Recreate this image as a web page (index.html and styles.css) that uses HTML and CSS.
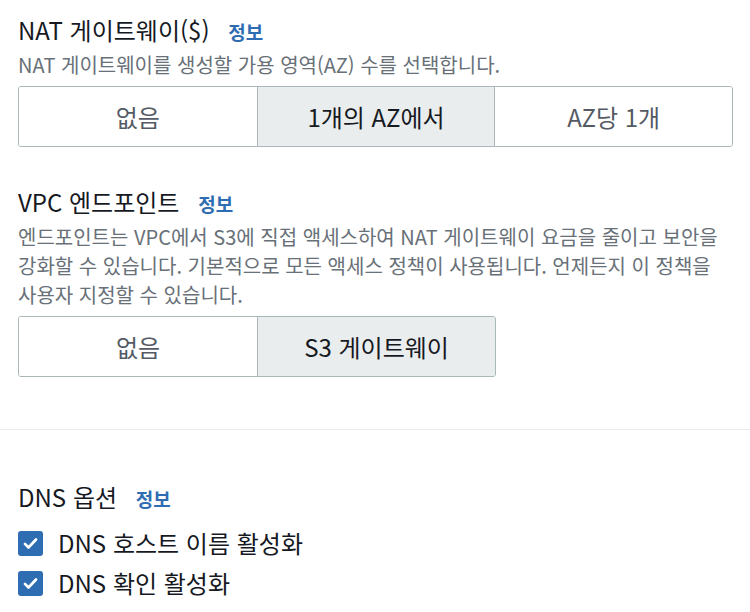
FILE: index.html
```html
<!DOCTYPE html>
<html lang="ko">
<head>
    <meta charset="UTF-8">
    <meta name="viewport" content="width=device-width, initial-scale=1.0">
    <title>VPC 설정</title>
    <link rel="stylesheet" href="styles.css">
</head>
<body>
    <div class="section">
        <div class="field-title">NAT 게이트웨이($) <a class="info" href="#">정보</a></div>
        <p class="field-desc">NAT 게이트웨이를 생성할 가용 영역(AZ) 수를 선택합니다.</p>
        <div class="segments three">
            <button class="segment">없음</button>
            <button class="segment selected">1개의 AZ에서</button>
            <button class="segment">AZ당 1개</button>
        </div>

        <div class="field-title vpc">VPC 엔드포인트 <a class="info" href="#">정보</a></div>
        <p class="field-desc">엔드포인트는 VPC에서 S3에 직접 액세스하여 NAT 게이트웨이 요금을 줄이고 보안을 강화할 수 있습니다. 기본적으로 모든 액세스 정책이 사용됩니다. 언제든지 이 정책을 사용자 지정할 수 있습니다.</p>
        <div class="segments two">
            <button class="segment">없음</button>
            <button class="segment selected">S3 게이트웨이</button>
        </div>
    </div>

    <hr class="divider">

    <div class="section dns">
        <div class="field-title">DNS 옵션 <a class="info" href="#">정보</a></div>
        <label class="check first">
            <span class="box"><svg viewBox="0 0 24 24" width="19" height="19"><path d="M5 12.5l4.5 4.5L19 7" fill="none" stroke="#fff" stroke-width="3.4" stroke-linecap="round" stroke-linejoin="round"/></svg></span>
            DNS 호스트 이름 활성화
        </label>
        <label class="check">
            <span class="box"><svg viewBox="0 0 24 24" width="19" height="19"><path d="M5 12.5l4.5 4.5L19 7" fill="none" stroke="#fff" stroke-width="3.4" stroke-linecap="round" stroke-linejoin="round"/></svg></span>
            DNS 확인 활성화
        </label>
    </div>
</body>
</html>
```

FILE: styles.css
```css
body {
    margin: 0;
    font-family: "Noto Sans CJK KR", "Noto Sans", sans-serif;
    background-color: #fff;
    color: #16191f;
}
.section {
    padding: 0 17px 0 18px;
}
.field-title {
    font-size: 24px;
    line-height: 30px;
    margin-top: 15px;
}
.field-title.vpc {
    margin-top: 40px;
}
.info {
    color: #2f6db3;
    font-size: 19px;
    line-height: 1;
    font-weight: bold;
    text-decoration: none;
    margin-left: 12px;
}
.field-desc {
    margin: 5px 0 7px;
    color: #687078;
    font-size: 20px;
    line-height: 29px;
}
.segments {
    display: grid;
    border: 1px solid #aab7b8;
    border-radius: 3px;
    overflow: hidden;
}
.segments.three {
    grid-template-columns: 1fr 1fr 1fr;
}
.segments.two {
    grid-template-columns: 1fr 1fr;
    width: 476px;
}
.segment {
    height: 59px;
    border: none;
    border-left: 1px solid #aab7b8;
    background-color: #fff;
    color: #545b64;
    font-family: inherit;
    font-size: 24px;
    padding: 0;
}
.segment:first-child {
    border-left: none;
}
.segment.selected {
    background-color: #eaeded;
    color: #16191f;
}
.divider {
    border: none;
    border-top: 1px solid #e9ebed;
    margin: 52px 0 0;
}
.dns .field-title {
    margin-top: 52px;
}
.check {
    display: flex;
    align-items: center;
    gap: 15px;
    font-size: 24px;
    line-height: 40px;
}
.check.first {
    margin-top: 11px;
}
.box {
    width: 25px;
    height: 25px;
    border-radius: 3px;
    background-color: #2f6db3;
    display: flex;
    align-items: center;
    justify-content: center;
}
```
